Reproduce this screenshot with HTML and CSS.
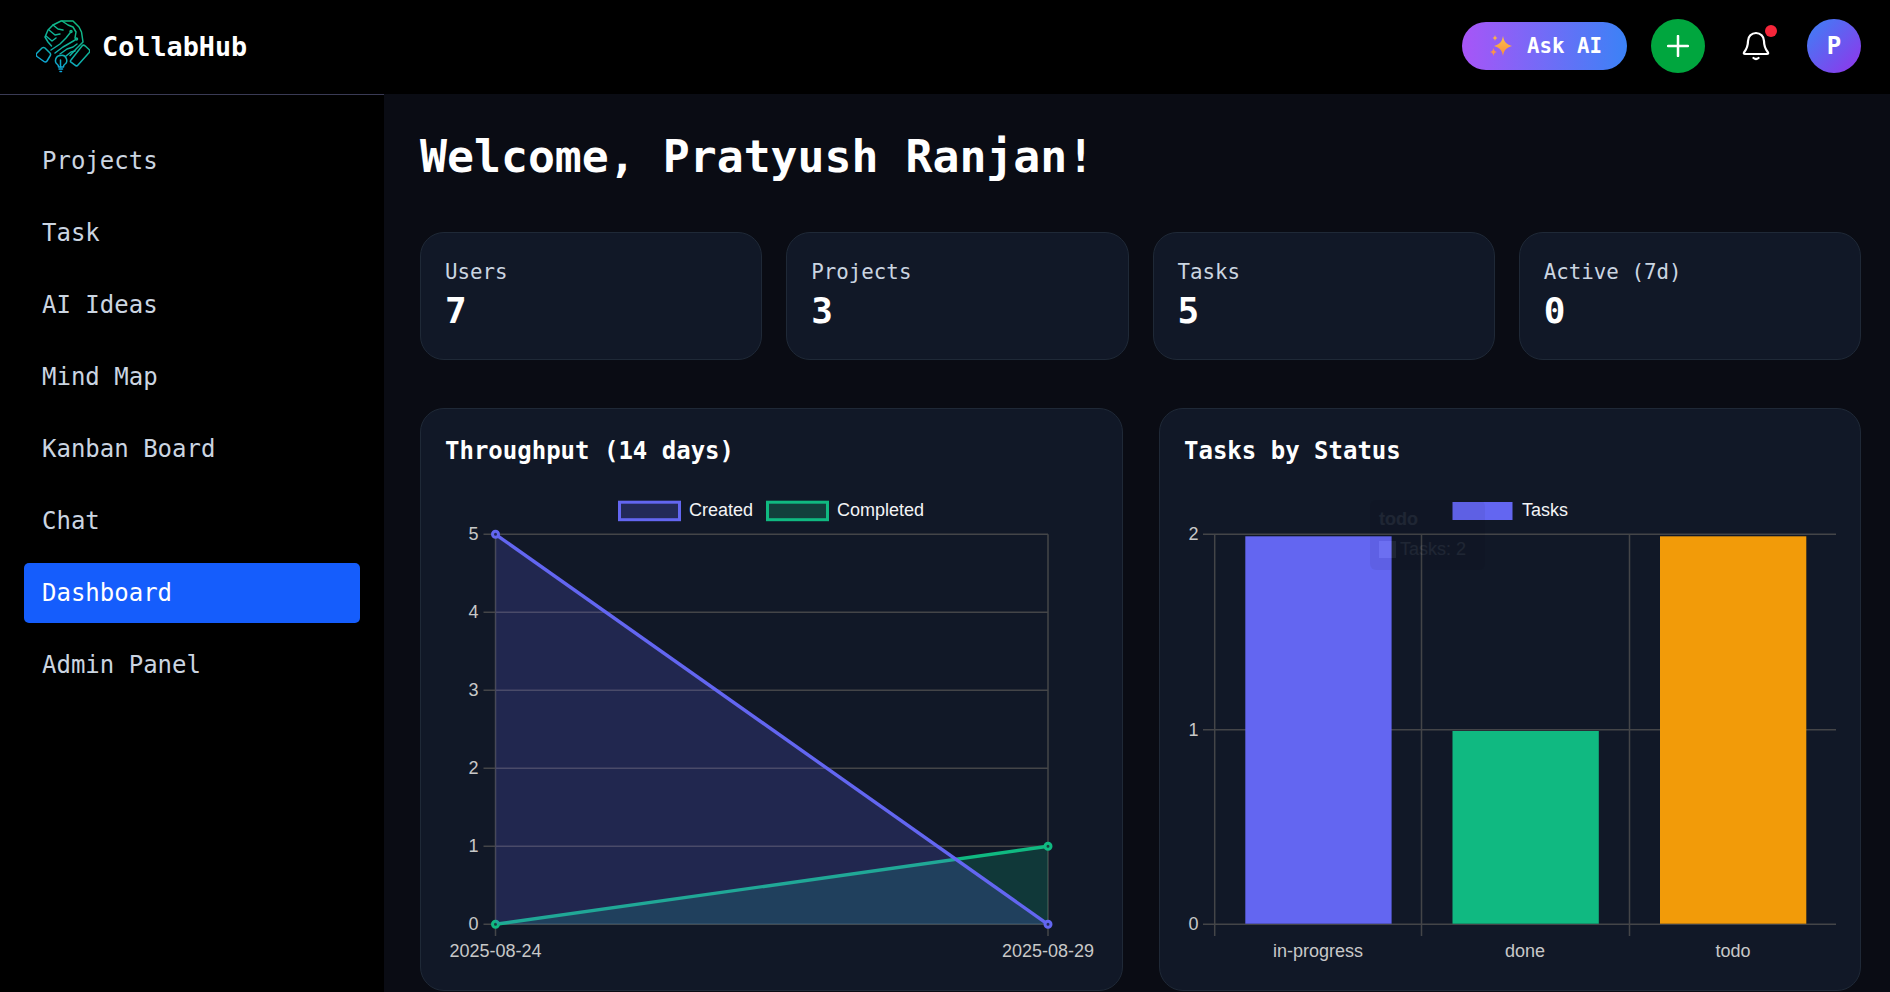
FILE: index.html
```html
<!DOCTYPE html>
<html>

<head>
    <title>CollabHub Dashboard</title>
    <link rel="stylesheet" href="styles.css">
</head>

<body>
    <header class="topbar">
        <div class="brand">
            <svg class="brand-logo" width="54" height="54" viewBox="0 0 54 54" fill="none">
                <defs>
                    <linearGradient id="logoGrad" gradientUnits="userSpaceOnUse" x1="36" y1="2" x2="14" y2="52">
                        <stop offset="0" stop-color="#10b981" />
                        <stop offset="0.55" stop-color="#0fb0a0" />
                        <stop offset="1" stop-color="#0ea5e9" />
                    </linearGradient>
                </defs>
                <g stroke="url(#logoGrad)" stroke-width="1.500" stroke-linecap="round" stroke-linejoin="round">
                    <!-- cuffs -->
                    <path d="M1 34l5-5c1-.8 2-.8 3 0l5 5c.8 1 .8 2 0 3l-3 5c-.8 1-2 1.200-3 .5l-7-5c-1-1-1-2.500 0-3.500z" />
                    <path d="M35 41l11-14c.8-1 2-1 3-.2l4 3.700c1 1 1 2 .2 3L42 46c-.8 1-2 1-3 .2l-4-3c-.8-.6-.8-1.400 0-2.200z" />
                    <!-- hands -->
                    <path d="M15.500 27l-3.500-4-3-5 3-7 5-5 8-4h12l6 6 2.500 5 1.500 10-6.500 6.500-6.500 7" />
                    <path d="M17 6l5 4 5 1M13 11l6 5 5-1M10 17l6 5 4-3" />
                    <path d="M26 2l6 4 5 2 3 5-1 6" />
                    <!-- circuit traces -->
                    <path d="M15 31l9-6 6-6 4-5M19 34l8-6 7-4 5-3M24 35l7-5 6-2 4-3M30 37l5-4 4-1" />
                    <circle cx="35" cy="12.500" r="1" />
                    <circle cx="40.500" cy="20" r="1" />
                    <!-- bulb -->
                    <path d="M24.500 36.500a5 5 0 0 0-3 9c.8.7 1 1.500 1 2.500h5c0-1 .2-1.800 1-2.500a5 5 0 0 0-4-9z" />
                    <path d="M23 50h3.500M24 52.500h1.500M24.500 41v7" />
                </g>
            </svg>
            <span class="brand-name">CollabHub</span>
        </div>
        <div class="top-actions">
            <button class="ask-btn">
                <svg width="24" height="22" viewBox="0 0 24 22">
                    <defs>
                        <linearGradient id="sparkGrad" x1="0" y1="0" x2="0" y2="1">
                            <stop offset="0" stop-color="#fcc44b" />
                            <stop offset="1" stop-color="#f98b3c" />
                        </linearGradient>
                    </defs>
                    <path fill="url(#sparkGrad)" d="M14 1c1 6 3 8 9 10-6 2-8 4-9 10-1-6-3-8-9-10 6-2 8-4 9-10z" />
                    <path fill="#fbb04a" d="M6 0c.5 2 1 2.500 2.500 3C7 3.500 6.500 4 6 6 5.500 4 5 3.500 3.500 3 5 2.500 5.500 2 6 0z" />
                    <path fill="#f9924a" d="M4.500 13c.5 2.500 1.200 3.300 3.500 4-2.300.7-3 1.500-3.500 4C4 18.500 3.300 17.700 1 17c2.300-.7 3-1.500 3.500-4z" />
                </svg>
                <span>Ask AI</span>
            </button>
            <button class="plus-btn">
                <svg width="22" height="22" viewBox="0 0 22 22" fill="none" stroke="#fff" stroke-width="2.500" stroke-linecap="round">
                    <path d="M11 1v20M1 11h20" />
                </svg>
            </button>
            <div class="bell">
                <svg width="28" height="30" viewBox="0 0 28 30" fill="none" stroke="#fff" stroke-width="2.200" stroke-linecap="round" stroke-linejoin="round">
                    <path d="M14 2a8 8 0 0 0-8 8c0 6-2 9-4 11.500-.5 1 0 1.500 1 1.500h22c1 0 1.500-.5 1-1.500C24 19 22 16 22 10a8 8 0 0 0-8-8z" />
                    <path d="M11.500 27c1.500 1.200 3.500 1.200 5 0" />
                </svg>
                <span class="bell-dot"></span>
            </div>
            <div class="avatar">P</div>
        </div>
    </header>

    <div class="layout">
        <aside class="sidebar">
            <a class="nav-item">Projects</a>
            <a class="nav-item">Task</a>
            <a class="nav-item">AI Ideas</a>
            <a class="nav-item">Mind Map</a>
            <a class="nav-item">Kanban Board</a>
            <a class="nav-item">Chat</a>
            <a class="nav-item active">Dashboard</a>
            <a class="nav-item">Admin Panel</a>
        </aside>

        <main class="content">
            <h1 class="welcome">Welcome, Pratyush Ranjan!</h1>

            <section class="stats">
                <div class="card stat">
                    <div class="stat-label">Users</div>
                    <div class="stat-value">7</div>
                </div>
                <div class="card stat">
                    <div class="stat-label">Projects</div>
                    <div class="stat-value">3</div>
                </div>
                <div class="card stat">
                    <div class="stat-label">Tasks</div>
                    <div class="stat-value">5</div>
                </div>
                <div class="card stat">
                    <div class="stat-label">Active (7d)</div>
                    <div class="stat-value">0</div>
                </div>
            </section>

            <section class="charts">
                <div class="card chart-card">
                    <h3 class="chart-title">Throughput (14 days)</h3>
                    <svg class="chart" width="652" height="480" viewBox="0 0 652 480">
                        <!-- grid -->
                        <g class="grid">
                            <path d="M38.500 44.300H603M38.500 122.300H603M38.500 200.300H603M38.500 278.300H603M38.500 356.300H603M38.500 434.300H603" />
                            <path d="M50.500 44.300V446M603 44.300V446" />
                        </g>
                        <!-- completed goes under created -->
                        <path class="area-green" d="M50.500 434.300L603 356.300V434.300z" />
                        <path class="line-green" d="M50.500 434.300L603 356.300" />
                        <circle class="dot-green" cx="50.500" cy="434.300" r="3" />
                        <circle class="dot-green" cx="603" cy="356.300" r="3" />
                        <path class="area-blue" d="M50.500 44.300L603 434.300H50.500z" />
                        <path class="line-blue" d="M50.500 44.300L603 434.300" />
                        <circle class="dot-blue" cx="50.500" cy="44.300" r="3" />
                        <circle class="dot-blue" cx="603" cy="434.300" r="3" />
                        <!-- legend -->
                        <rect class="legend-blue" x="174.500" y="12.200" width="60" height="17.500" />
                        <text class="legend-text" x="244" y="26">Created</text>
                        <rect class="legend-green" x="322.500" y="12.200" width="60" height="17.500" />
                        <text class="legend-text" x="392" y="26">Completed</text>
                        <!-- axis labels -->
                        <g class="axis-y">
                            <text x="33.500" y="50">5</text>
                            <text x="33.500" y="128">4</text>
                            <text x="33.500" y="206">3</text>
                            <text x="33.500" y="284">2</text>
                            <text x="33.500" y="362">1</text>
                            <text x="33.500" y="440">0</text>
                        </g>
                        <g class="axis-x">
                            <text x="50.500" y="467">2025-08-24</text>
                            <text x="603" y="467">2025-08-29</text>
                        </g>
                    </svg>
                </div>

                <div class="card chart-card">
                    <h3 class="chart-title">Tasks by Status</h3>
                    <svg class="chart" width="652" height="480" viewBox="1 0 652 480">
                        <g class="grid">
                            <path d="M20 44.300H653M20 239.700H653M20 434.300H653" />
                            <path d="M31.700 44.300V446M238.500 44.300V446M446.500 44.300V446" />
                        </g>
                        <rect x="62.300" y="46.300" width="146.300" height="387.400" fill="#6366f1" />
                        <rect x="269.500" y="241" width="146.300" height="192.700" fill="#10b981" />
                        <rect x="477" y="46.300" width="146.300" height="387.400" fill="#f29b09" />
                        <rect x="269.500" y="12" width="60" height="18" fill="#6366f1" />
                        <text class="legend-text" x="339" y="26">Tasks</text>
                        <g class="axis-y">
                            <text x="15.600" y="50">2</text>
                            <text x="15.600" y="246">1</text>
                            <text x="15.600" y="440">0</text>
                        </g>
                        <g class="axis-x">
                            <text x="135" y="467">in-progress</text>
                            <text x="342" y="467">done</text>
                            <text x="550" y="467">todo</text>
                        </g>
                        <!-- tooltip fading out -->
                        <g class="tooltip">
                            <rect class="tooltip-bg" x="187" y="10" width="115" height="70" rx="6" />
                            <text class="tooltip-title" x="196" y="35">todo</text>
                            <rect class="tooltip-swatch" x="196" y="51" width="17" height="17" />
                            <text class="tooltip-text" x="217" y="65">Tasks: 2</text>
                        </g>
                    </svg>
                </div>
            </section>
        </main>
    </div>
</body>

</html>
```
FILE: styles.css
```css
* {
    box-sizing: border-box;
}

html,
body {
    height: 100%;
}

body {
    margin: 0;
    background-color: #000;
    color: #fff;
    font-family: "DejaVu Sans Mono", "Liberation Mono", monospace;
    overflow: hidden;
}

/* top bar */
.topbar {
    display: flex;
    align-items: center;
    justify-content: space-between;
    height: 94px;
    padding: 0 29px 2px 36px;
    background-color: #000;
}

.brand {
    display: flex;
    align-items: center;
    gap: 12px;
}

.brand-logo {
    display: block;
}

.brand-name {
    font-size: 26.800px;
    font-weight: 700;
}

.top-actions {
    display: flex;
    align-items: center;
    gap: 24px;
}

.ask-btn {
    display: flex;
    align-items: center;
    gap: 14px;
    height: 48px;
    width: 165px;
    padding: 0 0 0 27px;
    border: none;
    border-radius: 24px;
    background: linear-gradient(90deg, #a855f7, #3b82f6);
    color: #fff;
    font-family: inherit;
    font-size: 20.800px;
    font-weight: 700;
}

.plus-btn {
    display: flex;
    align-items: center;
    justify-content: center;
    width: 54px;
    height: 54px;
    padding: 0;
    border: none;
    border-radius: 50%;
    background-color: #00a63e;
}

.bell {
    position: relative;
    display: flex;
    align-items: center;
    justify-content: center;
    width: 54px;
    height: 54px;
}

.bell-dot {
    position: absolute;
    top: 6px;
    right: 6px;
    width: 12px;
    height: 12px;
    border-radius: 50%;
    background-color: #f6263a;
}

.avatar {
    display: flex;
    align-items: center;
    justify-content: center;
    width: 54px;
    height: 54px;
    border-radius: 50%;
    background: linear-gradient(135deg, #3b82f6, #9333ea);
    font-size: 24px;
    font-weight: 700;
}

/* page layout */
.layout {
    display: flex;
    height: 898px;
}

.sidebar {
    display: flex;
    flex-direction: column;
    gap: 12px;
    width: 384px;
    flex-shrink: 0;
    padding: 36px 24px 0;
    border-top: 1px solid #3a3b55;
    background-color: #000;
}

.nav-item {
    display: flex;
    align-items: center;
    height: 60px;
    padding-left: 18px;
    border-radius: 5px;
    color: #cbd5e1;
    font-size: 24px;
}

.nav-item.active {
    background-color: #155dfc;
    color: #fff;
}

.content {
    flex: 1;
    min-width: 0;
    padding: 36px 29px 0 36px;
    background-color: #0a0c14;
}

.welcome {
    margin: 0 0 48px;
    font-size: 44.800px;
    line-height: 54px;
    font-weight: 700;
}

.card {
    border: 1px solid #1f2937;
    border-radius: 24px;
    background-color: #111827;
}

/* stat cards */
.stats {
    display: grid;
    grid-template-columns: repeat(4, 1fr);
    gap: 24px;
    margin-bottom: 48px;
}

.stat {
    height: 128px;
    padding: 24px;
}

.stat-label {
    margin-bottom: 1px;
    color: #cbd5e1;
    font-size: 20.800px;
    line-height: 31px;
}

.stat-value {
    font-size: 36px;
    line-height: 44px;
    font-weight: 700;
}

/* charts */
.charts {
    display: grid;
    grid-template-columns: 703px 702px;
    gap: 36px;
}

.chart-card {
    height: 583px;
    padding: 24px;
}

.chart-title {
    margin: 0 0 21px;
    font-size: 24px;
    line-height: 36px;
    font-weight: 600;
}

.chart {
    display: block;
    font-family: "Liberation Sans", Arial, sans-serif;
    font-size: 18px;
    overflow: visible;
}

.grid path {
    fill: none;
    stroke: #444548;
    stroke-width: 1.500;
}

.area-blue {
    fill: #6366f1;
    fill-opacity: 0.2;
}

.area-green {
    fill: #10b981;
    fill-opacity: 0.2;
}

.line-blue,
.line-green {
    fill: none;
    stroke-width: 3.400;
}

.line-blue {
    stroke: #6366f1;
}

.line-green {
    stroke: #10b981;
}

.dot-blue {
    fill: #23295a;
    stroke: #6366f1;
    stroke-width: 3;
}

.dot-green {
    fill: #143d3c;
    stroke: #10b981;
    stroke-width: 3;
}

.legend-blue {
    fill: #232a58;
    stroke: #6366f1;
    stroke-width: 3;
}

.legend-green {
    fill: #123f3c;
    stroke: #10b981;
    stroke-width: 3;
}

.legend-text {
    fill: #f3f4f6;
}

.axis-y text {
    fill: #c8c8c8;
    text-anchor: end;
}

.axis-x text {
    fill: #c8c8c8;
    text-anchor: middle;
}

.tooltip {
    opacity: 0.06;
}

.tooltip-bg {
    fill: #000;
    fill-opacity: 0.8;
}

.tooltip-title {
    fill: #fff;
    font-weight: 700;
}

.tooltip-swatch {
    fill: #fff;
}

.tooltip-text {
    fill: #fff;
}
```
